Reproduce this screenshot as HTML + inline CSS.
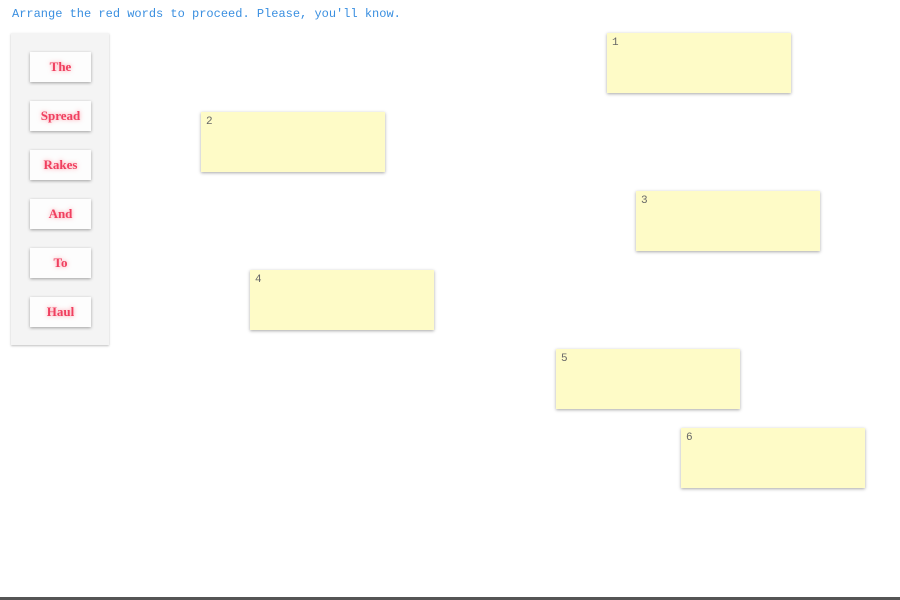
<!DOCTYPE html>
<html><head><meta charset="utf-8"><style>
html,body{margin:0;padding:0;width:900px;height:600px;overflow:hidden;background:#fff;position:relative}
.msg{position:absolute;left:12px;top:7px;font:12px "Liberation Mono",monospace;color:#3a8fe0;white-space:nowrap}
.panel{position:absolute;left:11px;top:33px;width:98px;height:312px;background:#f4f4f4;box-shadow:0 1px 2px rgba(0,0,0,.25)}
.w{position:absolute;left:19px;width:61px;height:30px;background:#fdfdfd;box-shadow:0 1px 3px rgba(0,0,0,.35);text-align:center;font:bold 13px/29px "Liberation Serif",serif;color:#f04060;text-shadow:0 0 4px rgba(255,80,100,.6)}
.n{position:absolute;width:184px;height:60px;background:#fefbc7;box-shadow:0 1px 3px rgba(0,0,0,.35);font:11px "Liberation Mono",monospace;color:#666;box-sizing:border-box;padding:4px 5px}
.bar{position:absolute;left:0;top:597px;width:900px;height:3px;background:#555}
</style></head><body>
<div class="msg">Arrange the red words to proceed. Please, you'll know.</div>
<div class="panel">
<div class="w" style="top:19px">The</div>
<div class="w" style="top:68px">Spread</div>
<div class="w" style="top:117px">Rakes</div>
<div class="w" style="top:166px">And</div>
<div class="w" style="top:215px">To</div>
<div class="w" style="top:264px">Haul</div>
</div>
<div class="n" style="left:607px;top:33px">1</div>
<div class="n" style="left:201px;top:112px">2</div>
<div class="n" style="left:636px;top:191px">3</div>
<div class="n" style="left:250px;top:270px">4</div>
<div class="n" style="left:556px;top:349px">5</div>
<div class="n" style="left:681px;top:428px">6</div>
<div class="bar"></div>
</body></html>
